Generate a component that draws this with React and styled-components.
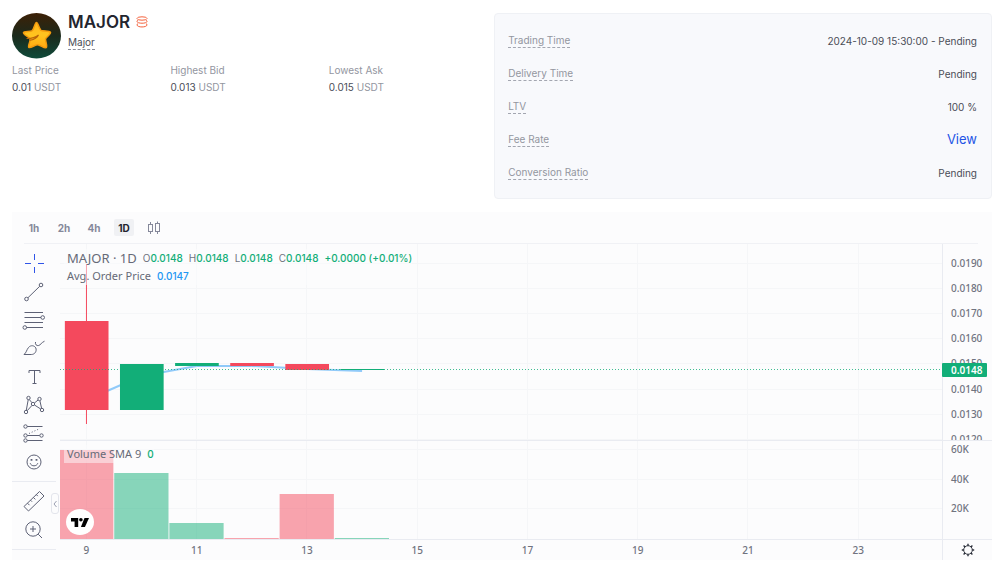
import { useState } from "react";
import styled, { createGlobalStyle } from "styled-components";

const GREEN = "#12ae78";
const RED = "#f4495d";

const STATS = [
  { label: "Last Price", value: "0.01" },
  { label: "Highest Bid", value: "0.013" },
  { label: "Lowest Ask", value: "0.015" }
];

const DETAILS = [
  { label: "Trading Time", value: "2024-10-09 15:30:00 - Pending" },
  { label: "Delivery Time", value: "Pending" },
  { label: "LTV", value: "100 %" },
  { label: "Fee Rate", value: "View", link: true },
  { label: "Conversion Ratio", value: "Pending" }
];

const INTERVALS = ["1h", "2h", "4h", "1D"];

const OHLC = [
  ["O", "0.0148"],
  ["H", "0.0148"],
  ["L", "0.0148"],
  ["C", "0.0148"]
];

// centre of the first day and distance between days, in % of the pane width
const FIRST = 3;
const STEP = 6.25;
const dayX = day => FIRST + (day - 9) * STEP;
const pct = value => `${value}%`;

const TICKS = [9, 11, 13, 15, 17, 19, 21, 23];

const PRICES = [
  { text: "0.0190", y: 19 },
  { text: "0.0180", y: 44 },
  { text: "0.0170", y: 69 },
  { text: "0.0160", y: 94 },
  { text: "0.0150", y: 119 },
  { text: "0.0140", y: 145 },
  { text: "0.0130", y: 170 },
  { text: "0.0120", y: 195 }
];

const VOLUMES = [
  { text: "60K", y: 8 },
  { text: "40K", y: 38 },
  { text: "20K", y: 67 }
];

const CANDLES = [
  { day: 9, top: 77, bottom: 166, high: 20, low: 180, color: RED },
  { day: 10, top: 120, bottom: 166, color: GREEN },
  { day: 11, top: 119, bottom: 122, color: GREEN },
  { day: 12, top: 119, bottom: 122, color: RED },
  { day: 13, top: 120, bottom: 126, color: RED },
  { day: 14, top: 125, bottom: 126, color: GREEN }
];

const AVERAGE = [156, 132, 122, 122, 125, 127];

const BARS = [
  { day: 9, height: 89, color: RED },
  { day: 10, height: 66, color: GREEN },
  { day: 11, height: 16, color: GREEN },
  { day: 12, height: 1, color: RED },
  { day: 13, height: 45, color: RED },
  { day: 14, height: 1, color: GREEN }
];

const DRAW_TOOLS = [
  {
    name: "Cross",
    active: true,
    art: <path d="M12.500 3v6M12.500 16v6M3 12.500h6M16 12.500h6" />
  },
  {
    name: "Trend line",
    art: (
      <>
        <circle cx="4.500" cy="19" r="1.800" />
        <circle cx="19" cy="5" r="1.800" />
        <path d="M6 17.700 17.700 6.300" />
      </>
    )
  },
  {
    name: "Fib retracement",
    art: (
      <>
        <path d="M2.500 4.500h18.500M2.500 9.500h16.500M2.500 14.500h18.500M4.500 19.500H21" />
        <circle cx="20.700" cy="9.500" r="1.800" />
        <circle cx="2.800" cy="19.500" r="1.800" />
      </>
    )
  },
  {
    name: "Brush",
    art: (
      <>
        <path d="M2 18.500c2.500-2 2.500-4.500 4.500-7 2.500-2.800 6-2 7.300.500 1.200 3-.8 6.500-4.500 6.500z" />
        <path d="M13.500 6c-.5 2.500 1 4 3.200 3.500 1.800-.5 2.800-3 5.800-4.300" />
      </>
    )
  },
  {
    name: "Text",
    art: <path d="M7 8V5.500h11V8M12.500 5.500v13M10.500 18.500h4" />
  },
  {
    name: "Pattern",
    art: (
      <>
        <circle cx="6.500" cy="5" r="1.700" />
        <circle cx="17.500" cy="6" r="1.700" />
        <circle cx="11" cy="11" r="1.700" />
        <circle cx="4" cy="19" r="1.700" />
        <circle cx="20" cy="17" r="1.700" />
        <path d="M6.200 6.800 4.300 17.200M7.300 6.600l2.600 3M12.400 10l3.700-3M17.900 7.800l1.700 7.500M5.200 17.700l4.800-5.300M12.500 12l6.200 4" />
      </>
    )
  },
  {
    name: "Forecast",
    art: (
      <>
        <circle cx="3.500" cy="5.500" r="1.700" />
        <circle cx="3.500" cy="14.500" r="1.700" />
        <circle cx="3.500" cy="19.500" r="1.700" />
        <circle cx="19.500" cy="14.500" r="1.700" />
        <path d="M5.200 5.500H20.500M5.200 14.500h12.500M5.200 19.500H20.500" />
        <path d="M7 12.500 18 7.500" strokeDasharray="1 2" />
      </>
    )
  },
  {
    name: "Icons",
    art: (
      <>
        <circle cx="12" cy="12" r="7" />
        <path d="M8.200 13.200c1 3.500 6.600 3.500 7.600 0" />
        <path d="M9.500 9v1.800M14.500 9v1.800" strokeWidth="1.800" />
      </>
    )
  }
];

const VIEW_TOOLS = [
  {
    name: "Measure",
    art: (
      <path d="M2 17.500 17.500 2.500 22 7 6.500 22zM5.500 14.200l2 2M8.500 11.200l1.500 1.500M11.300 8.400l2 2M14.300 5.600l1.500 1.500" />
    )
  },
  {
    name: "Zoom in",
    art: (
      <>
        <circle cx="11" cy="11" r="7.200" />
        <path d="m16.200 16.200 3.800 3.800M11 8v6M8 11h6" />
      </>
    )
  }
];

export default function App() {
  const [selected, setSelected] = useState("1D");

  return (
    <>
      <GlobalStyle />
      <Page>
        <Overview>
          <section>
            <TokenHeader>
              <TokenLogo />
              <div>
                <TokenTitle>
                  MAJOR
                  <StackIcon />
                </TokenTitle>
                <TokenName href="#major">Major</TokenName>
              </div>
            </TokenHeader>
            <Stats>
              {STATS.map(stat => (
                <div key={stat.label}>
                  <StatLabel>{stat.label}</StatLabel>
                  <StatValue>
                    {stat.value} <span>USDT</span>
                  </StatValue>
                </div>
              ))}
            </Stats>
          </section>
          <Details>
            {DETAILS.map(item => (
              <DetailRow key={item.label}>
                <dt>{item.label}</dt>
                <dd>
                  {item.link ? <a href="#fee-rate">{item.value}</a> : item.value}
                </dd>
              </DetailRow>
            ))}
          </Details>
        </Overview>

        <ChartCard>
          <Toolbar>
            {INTERVALS.map(interval => (
              <IntervalButton
                key={interval}
                $active={interval === selected}
                onClick={() => setSelected(interval)}
              >
                {interval}
              </IntervalButton>
            ))}
            <IntervalButton aria-label="Chart type">
              <CandlesIcon />
            </IntervalButton>
          </Toolbar>
          <ChartBody>
            <Sidebar>
              <ToolGroup $rows={8}>
                {DRAW_TOOLS.map(tool => (
                  <Tool key={tool.name} {...tool} />
                ))}
              </ToolGroup>
              <ToolGroup $rows={2}>
                {VIEW_TOOLS.map(tool => (
                  <Tool key={tool.name} {...tool} />
                ))}
              </ToolGroup>
              <CollapseButton aria-label="Hide drawing toolbar">
                <svg width="4" height="8" fill="none" stroke="#9a9fb0">
                  <path d="M3.500 1 1 4l2.500 3" />
                </svg>
              </CollapseButton>
            </Sidebar>
            <Panes>
              <Pane>
                <PricePane />
                <PriceLegend>
                  <LegendRow>
                    <LegendTitle>MAJOR · 1D</LegendTitle>
                    {OHLC.map(([key, value]) => (
                      <LegendItem key={key}>
                        {key}
                        <b>{value}</b>
                      </LegendItem>
                    ))}
                    <LegendItem>
                      <b>+0.0000 (+0.01%)</b>
                    </LegendItem>
                  </LegendRow>
                  <LegendRow>
                    <LegendName>Avg. Order Price</LegendName>
                    <LegendValue $color="#2196f3">0.0147</LegendValue>
                  </LegendRow>
                </PriceLegend>
              </Pane>
              <Axis>
                <Canvas height="196">
                  {PRICES.map(price => (
                    <AxisText key={price.text} x="8" y={price.y + 4}>
                      {price.text}
                    </AxisText>
                  ))}
                </Canvas>
                <PriceTag>0.0148</PriceTag>
              </Axis>

              <Pane $divided>
                <VolumePane />
                <VolumeLegend>
                  <LegendName>Volume SMA 9</LegendName>
                  <LegendValue $color={GREEN}>0</LegendValue>
                </VolumeLegend>
                <Watermark href="#tradingview" aria-label="TradingView">
                  <svg width="18" height="11" viewBox="0 0 20 12">
                    <path d="M0 1h8v10H4V5H0z" />
                    <circle cx="11" cy="3" r="2" />
                    <path d="M15 1h5l-4.500 10H11z" />
                  </svg>
                </Watermark>
              </Pane>
              <Axis $divided>
                <Canvas height="98">
                  {VOLUMES.map(volume => (
                    <AxisText key={volume.text} x="8" y={volume.y + 4}>
                      {volume.text}
                    </AxisText>
                  ))}
                </Canvas>
              </Axis>

              <Pane $divided>
                <Canvas height="20">
                  {TICKS.map(day => (
                    <AxisText
                      key={day}
                      x={pct(dayX(day))}
                      y="14"
                      textAnchor="middle"
                    >
                      {day}
                    </AxisText>
                  ))}
                </Canvas>
              </Pane>
              <Axis $divided>
                <SettingsButton aria-label="Chart settings">
                  <GearIcon />
                </SettingsButton>
              </Axis>
            </Panes>
          </ChartBody>
        </ChartCard>
      </Page>
    </>
  );
}

function Tool({ name, active, art }) {
  return (
    <ToolButton aria-label={name} $active={active}>
      <svg width="24" height="24" viewBox="0 0 24 24" fill="none" stroke="currentColor">
        {art}
      </svg>
    </ToolButton>
  );
}

function PricePane() {
  return (
    <Canvas height="196">
      <GridLines rows={PRICES} />
      {AVERAGE.slice(1).map((y, i) => (
        <line
          key={i}
          x1={pct(dayX(9 + i))}
          y1={AVERAGE[i]}
          x2={pct(dayX(10 + i))}
          y2={y}
          stroke="#90caf9"
          strokeWidth="2"
        />
      ))}
      {CANDLES.map(candle => (
        <g key={candle.day} fill={candle.color}>
          {candle.high && (
            <line
              x1={pct(dayX(candle.day))}
              x2={pct(dayX(candle.day))}
              y1={candle.high}
              y2={candle.low}
              stroke={candle.color}
            />
          )}
          <rect
            x={pct(dayX(candle.day) - 2.45)}
            y={candle.top}
            width="4.95%"
            height={candle.bottom - candle.top}
          />
        </g>
      ))}
      <line
        x1="0"
        x2="100%"
        y1="125.500"
        y2="125.500"
        stroke={GREEN}
        strokeOpacity="0.8"
        strokeDasharray="1 2"
      />
    </Canvas>
  );
}

function VolumePane() {
  return (
    <Canvas height="98">
      <GridLines rows={VOLUMES} />
      {BARS.map(bar => (
        <rect
          key={bar.day}
          x={pct(dayX(bar.day) - 3.1)}
          y={98 - bar.height}
          width="6.15%"
          height={bar.height}
          fill={bar.color}
          fillOpacity="0.5"
        />
      ))}
    </Canvas>
  );
}

function GridLines({ rows }) {
  return (
    <g stroke="#f5f6f8" shapeRendering="crispEdges">
      {TICKS.map(day => (
        <line key={day} x1={pct(dayX(day))} x2={pct(dayX(day))} y1="0" y2="100%" />
      ))}
      {rows.map(row => (
        <line key={row.text} x1="0" x2="100%" y1={row.y} y2={row.y} />
      ))}
    </g>
  );
}

function TokenLogo() {
  return (
    <svg width="50" height="46" viewBox="0 0 50 46" role="img" aria-label="MAJOR">
      <defs>
        <linearGradient id="night" x1="0" y1="0" x2="0" y2="1">
          <stop offset="0" stopColor="#3d2006" />
          <stop offset="0.5" stopColor="#1b2a1c" />
          <stop offset="1" stopColor="#0f4a3a" />
        </linearGradient>
        <linearGradient id="gold" x1="0" y1="0" x2="0" y2="1">
          <stop offset="0" stopColor="#ffb61c" />
          <stop offset="0.5" stopColor="#ffc41f" />
          <stop offset="1" stopColor="#ffab12" />
        </linearGradient>
      </defs>
      <ellipse cx="24.500" cy="22.800" rx="24.500" ry="22.800" fill="url(#night)" />
      <path
        d="M24.500 9.500c1.500 0 2.600 6.300 4.500 7.800 2 1 8.500.2 9.500 2 .8 1.700-4.800 5-5 7 0 2.200 2.300 7.300.6 8.400-1.700 1-6-3-8.400-3-2.700 0-7.400 4-8.900 2.700-1.300-1.200 1.800-6.200 1.300-8.200-.6-2.200-7.100-4.400-6.600-6.700.4-1.800 6.600-.5 8.600-1.800 2-1.500 2.700-8.200 4.400-8.200z"
        fill="url(#gold)"
        stroke="#f39a0d"
        strokeWidth="1.500"
        strokeLinejoin="round"
      />
      <path
        d="M15 25.500c4.500 0 8.500-1 11.500-3.500-1.500 2.800-4.500 4.500-8 5.200"
        fill="none"
        stroke="#b9650a"
        strokeWidth="1.200"
        strokeLinecap="round"
      />
    </svg>
  );
}

function StackIcon() {
  return (
    <svg width="12" height="12" viewBox="0 0 12 12" fill="none" stroke="#f4623c">
      <ellipse cx="6" cy="2.500" rx="5" ry="1.700" />
      <path d="M1 5.500c.3 2.300 9.700 2.300 10 0M1 5.500c0-.6.400-1 1-1.300M11 5.500c0-.6-.4-1-1-1.300" />
      <path d="M1 9c.3 2.600 9.700 2.600 10 0M1 9c0-.7.400-1.100 1-1.500M11 9c0-.7-.4-1.100-1-1.500" />
    </svg>
  );
}

function CandlesIcon() {
  return (
    <svg width="14" height="14" viewBox="0 0 14 14" fill="none" stroke="currentColor">
      <rect x="1.500" y="3.500" width="4" height="7" />
      <rect x="8.500" y="2.500" width="4" height="8" />
      <path d="M3.500 1v2.500M3.500 10.500V13M10.500 .500v2M10.500 10.500V13" />
    </svg>
  );
}

function GearIcon() {
  return (
    <svg width="14" height="14" viewBox="0 0 14 14" fill="none" stroke="#2a2e39">
      <circle cx="7" cy="7" r="4.300" />
      <path
        d="M7 .800v1.900M7 11.300v1.900M.8 7h1.900M11.300 7h1.900M2.600 2.600 4 4M10 10l1.400 1.400M2.600 11.400 4 10M10 4l1.400-1.400"
        strokeWidth="1.400"
      />
    </svg>
  );
}

const GlobalStyle = createGlobalStyle`
  * {
    box-sizing: border-box;
  }

  body {
    margin: 0;
    background: #fff;
    color: #4a4d57;
    font-family: Inter, "Liberation Sans", sans-serif;
    font-size: 10px;
    line-height: 16px;
  }

  button {
    display: flex;
    align-items: center;
    justify-content: center;
    padding: 0;
    border: 0;
    background: none;
    font: inherit;
    cursor: pointer;
  }

  a {
    text-decoration: none;
  }

  svg {
    display: block;
  }
`;

const Page = styled.main`
  padding: 13px 8px 2px 12px;
`;

const Overview = styled.div`
  display: grid;
  grid-template-columns: 21fr 22fr;
  gap: 7px;
`;

const TokenHeader = styled.header`
  display: flex;
  gap: 6px;
`;

const TokenTitle = styled.h1`
  display: flex;
  align-items: center;
  gap: 6px;
  margin: 0;
  color: #23252f;
  font-size: 17px;
  font-weight: 600;
  line-height: 18px;
`;

const TokenName = styled.a`
  display: inline-block;
  margin-top: 5px;
  border-bottom: 1px dashed #8b8e99;
  color: #4a4d57;
  line-height: 13px;
`;

const Stats = styled.div`
  display: grid;
  grid-template-columns: repeat(3, 1fr);
  margin-top: 3px;
`;

const StatLabel = styled.div`
  color: #93969f;
`;

const StatValue = styled.div`
  margin-top: 1px;

  span {
    color: #93969f;
  }
`;

const Details = styled.dl`
  margin: 0;
  padding: 10px 14px 9px 13px;
  border: 1px solid #eff1f5;
  border-radius: 4px;
  background: #f8f9fc;
`;

const DetailRow = styled.div`
  display: flex;
  align-items: center;
  justify-content: space-between;
  height: 33px;

  dt {
    border-bottom: 1px dashed #a3a6b0;
    color: #93969f;
    line-height: 14px;
  }

  dd {
    margin: 0;
  }

  a {
    color: #2354e6;
    font-size: 13px;
  }
`;

const ChartCard = styled.section`
  margin-top: 13px;
  background: #fcfcfd;
`;

const Toolbar = styled.div`
  display: flex;
  align-items: center;
  gap: 10px;
  height: 32px;
  margin: 0 14px 0 12px;
  border-bottom: 1px solid #f0f1f5;
`;

const IntervalButton = styled.button`
  width: 20px;
  height: 17px;
  border-radius: 2px;
  background: ${props => (props.$active ? "#f0f1f4" : "none")} !important;
  color: ${props => (props.$active ? "#23252f" : "#85889a")};
  font-weight: 700 !important;
`;

const ChartBody = styled.div`
  display: flex;
`;

const Sidebar = styled.div`
  position: relative;
  width: 48px;
  padding-right: 4px;
`;

const ToolGroup = styled.div`
  display: grid;
  grid-template-rows: repeat(${props => props.$rows}, 1fr);
  height: ${props => (props.$rows === 8 ? 238 : 68)}px;
  padding: 5px 0;
  border-bottom: 1px solid #e9ebf1;
`;

const ToolButton = styled.button`
  min-height: 0;
  overflow: visible;
  color: ${props => (props.$active ? "#2f55e8" : "#5d6175")};
`;

const CollapseButton = styled.button`
  position: absolute;
  right: 1px;
  top: 249px;
  width: 8px;
  height: 21px;
  border: 1px solid #e3e5ec;
  border-radius: 3px;
  background: #fcfcfd;
`;

const Panes = styled.div`
  display: grid;
  flex: 1;
  grid-template-columns: 1fr 50px;
  font-family: "Noto Sans", sans-serif;
`;

const Pane = styled.div`
  position: relative;
  border-top: ${props => (props.$divided ? "1px solid #e9ebf1" : "0")};
`;

const Axis = styled(Pane)`
  border-left: 1px solid #e9ebf1;
`;

const Canvas = styled.svg`
  width: 100%;
  overflow: hidden;
`;

const AxisText = styled.text`
  fill: #70737f;
  font-size: 10px;
  font-weight: 500;
`;

const PriceTag = styled.div`
  position: absolute;
  top: 119px;
  left: -1px;
  width: 45px;
  padding-left: 9px;
  border-radius: 1px;
  background: ${GREEN};
  color: #fff;
  font-weight: 600;
  line-height: 14px;
`;

const PriceLegend = styled.div`
  position: absolute;
  top: 5px;
  left: 4px;
  padding-left: 3px;
  background: rgba(252, 252, 253, 0.5);
`;

const LegendRow = styled.div`
  display: flex;
  align-items: center;
  gap: 6px;
  height: 18px;
`;

const LegendTitle = styled.span`
  color: #666a77;
  font-size: 13px;
`;

const LegendName = styled.span`
  color: #666a77;
  font-size: 11px;
`;

const LegendItem = styled.span`
  color: #70737f;
  font-size: 10px;
  font-family: Inter, sans-serif;

  b {
    color: ${GREEN};
    font-weight: 500;
  }
`;

const LegendValue = styled.span`
  color: ${props => props.$color};
  font-size: 10px;
  font-family: Inter, sans-serif;
  font-weight: 500;
`;

const VolumeLegend = styled.div`
  position: absolute;
  top: 4px;
  left: 4px;
  display: flex;
  align-items: center;
  gap: 6px;
  height: 18px;
  padding-left: 3px;
  background: rgba(252, 252, 253, 0.5);
`;

const Watermark = styled.a`
  position: absolute;
  bottom: 4px;
  left: 6px;
  display: flex;
  align-items: center;
  justify-content: center;
  width: 28px;
  height: 26px;
  border-radius: 50%;
  background: #fff;
`;

const SettingsButton = styled.button`
  width: 100%;
  height: 20px;
`;
